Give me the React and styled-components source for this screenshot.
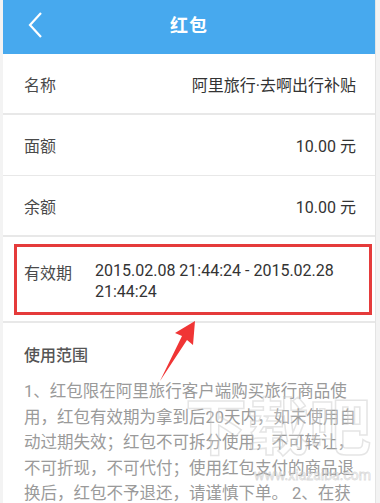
import React from 'react';
import styled, {createGlobalStyle} from 'styled-components';

const Global = createGlobalStyle`
    html, body {
        margin: 0;
        padding: 0;
        background: #f3f3f3;
    }
    body {
        font-family: Roboto, "Noto Sans CJK SC", sans-serif;
        height: 503px;
        overflow: hidden;
    }
`

const Page = styled.div`
    position: relative;
    margin: 0 4px 0 3px;
    height: 503px;
    overflow: hidden;
    background: #ffffff;
    border-right: 1px solid #e4e4e4;
`

const Header = styled.div`
    display: flex;
    align-items: center;
    justify-content: center;
    position: relative;
    height: 54px;
    padding-bottom: 6px;
    box-sizing: border-box;
    background: #47a9ee;
`

const Back = styled.div`
    position: absolute;
    left: 22px;
    top: 11px;
    width: 20px;
    height: 28px;
`

const Title = styled.div`
    color: #fff;
    font-size: 18px;
    font-weight: 700;
    letter-spacing: 1px;
`

const Row = styled.div`
    position: relative;
    display: flex;
    align-items: ${p => p.top ? 'flex-start' : 'center'};
    justify-content: space-between;
    height: ${p => p.h}px;
    box-sizing: border-box;
    padding: ${p => p.top ? '23px' : '0'} 19px 0 21px;
    border-bottom: ${p => p.thin ? 1 : 2}px solid #e8e8e8;
`

const Label = styled.div`
    flex: 0 0 auto;
    font-size: 16px;
    color: #4a4a4a;
    width: ${p => p.w || 'auto'};
`

const Value = styled.div`
    font-size: 16px;
    color: #333;
    text-align: ${p => p.left ? 'left' : 'right'};
    flex: ${p => p.left ? '1' : '0 0 auto'};
    line-height: ${p => p.left ? '21px' : 'normal'};
`

const Mark = styled.div`
    position: absolute;
    left: 11px;
    right: 3px;
    top: 7px;
    bottom: 6px;
    border: 3px solid #e53b3b;
`

const Section = styled.div`
    padding: 19px 19px 0 21px;
`

const SecTitle = styled.div`
    font-size: 16px;
    font-weight: 500;
    color: #555;
    margin-bottom: 13px;
`

const Para = styled.div`
    font-size: 16.5px;
    color: #9a9a9a;
    line-height: 25.5px;
    white-space: nowrap;
`

const Arrow = styled.svg`
    position: absolute;
    left: -3px;
    top: 0;
    pointer-events: none;
`

const Watermark = styled.div`
    position: absolute;
    right: 4px;
    top: 398px;
    font-size: 62px;
    font-weight: 700;
    color: rgba(255, 255, 255, 0.2);
    -webkit-text-stroke: 1.5px rgba(190, 190, 190, 0.4);
    line-height: 1;
    pointer-events: none;
    & span {
        display: block;
        font-size: 14px;
        font-weight: 400;
        -webkit-text-stroke: 0.8px rgba(190, 190, 190, 0.55);
        text-align: right;
        margin-top: 8px;
    }
`

const lines = [
    '1、红包限在阿里旅行客户端购买旅行商品使',
    '用，红包有效期为拿到后20天内，如未使用自',
    '动过期失效；红包不可拆分使用，不可转让，',
    '不可折现，不可代付；使用红包支付的商品退',
    '换后，红包不予退还，请谨慎下单。 2、在获'
]

export default function App() {
    return (
        <>
            <Global/>
            <Page>
                <Header>
                    <Back>
                        <svg width="20" height="28" viewBox="0 0 20 28">
                            <path d="M16 2 L5 14 L16 26" fill="none" stroke="#fff" strokeWidth="2.2"/>
                        </svg>
                    </Back>
                    <Title>红包</Title>
                </Header>
                <Row h={61}>
                    <Label>名称</Label>
                    <Value>阿里旅行·去啊出行补贴</Value>
                </Row>
                <Row h={61} thin>
                    <Label>面额</Label>
                    <Value>10.00 元</Value>
                </Row>
                <Row h={61}>
                    <Label>余额</Label>
                    <Value>10.00 元</Value>
                </Row>
                <Row h={86} top>
                    <Label w="71px">有效期</Label>
                    <Value left>2015.02.08 21:44:24 - 2015.02.28 21:44:24</Value>
                    <Mark/>
                </Row>
                <Section>
                    <SecTitle>使用范围</SecTitle>
                    {lines.map((l, i) => <Para key={i}>{l}</Para>)}
                </Section>
                <Watermark>
                    下载吧
                    <span>www.xiazaiba.com</span>
                </Watermark>
                <Arrow width="380" height="503">
                    <polygon points="195,321 193,345 187,340 160,381 182,336 175,333" fill="#f03535"/>
                </Arrow>
            </Page>
        </>
    )
}
